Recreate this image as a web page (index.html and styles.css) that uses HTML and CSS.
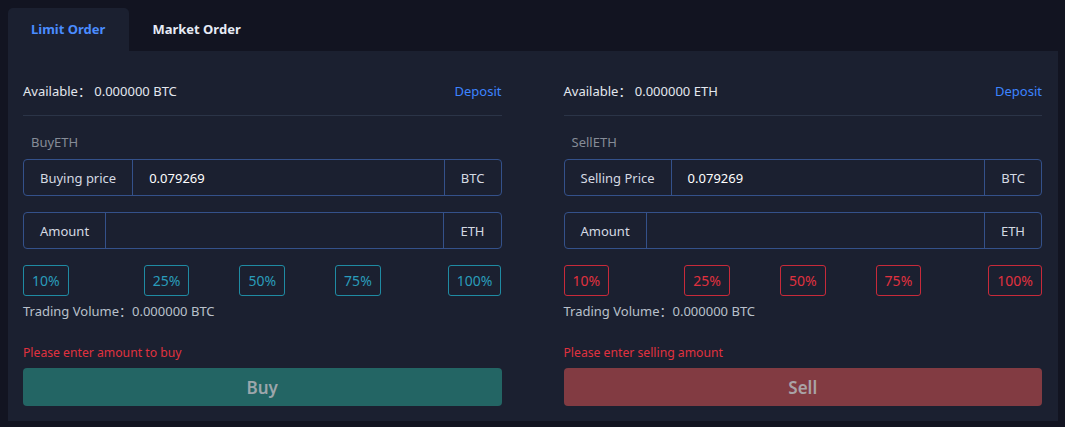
FILE: index.html
```html
<!DOCTYPE html>
<html>
<head>
<meta charset="utf-8">
<link rel="stylesheet" href="styles.css">
</head>
<body>
<div class="tabs">
  <div class="tab active">Limit Order</div>
  <div class="tab">Market Order</div>
</div>
<div class="panel">
  <div class="col">
    <div class="avail"><span>Available：&nbsp;0.000000 BTC</span><a class="deposit">Deposit</a></div>
    <div class="title">BuyETH</div>
    <div class="group">
      <div class="glabel">Buying price</div>
      <div class="gvalue">0.079269</div>
      <div class="gunit">BTC</div>
    </div>
    <div class="group g2">
      <div class="glabel">Amount</div>
      <div class="gvalue"></div>
      <div class="gunit">ETH</div>
    </div>
    <div class="pcts buy">
      <span class="pct">10%</span><span class="pct">25%</span><span class="pct">50%</span><span class="pct">75%</span><span class="pct">100%</span>
    </div>
    <div class="vol">Trading Volume：0.000000 BTC</div>
    <div class="err">Please enter amount to buy</div>
    <div class="btn btn-buy">Buy</div>
  </div>
  <div class="col">
    <div class="avail"><span>Available：&nbsp;0.000000 ETH</span><a class="deposit">Deposit</a></div>
    <div class="title">SellETH</div>
    <div class="group">
      <div class="glabel">Selling Price</div>
      <div class="gvalue">0.079269</div>
      <div class="gunit">BTC</div>
    </div>
    <div class="group g2">
      <div class="glabel">Amount</div>
      <div class="gvalue"></div>
      <div class="gunit">ETH</div>
    </div>
    <div class="pcts sell">
      <span class="pct">10%</span><span class="pct">25%</span><span class="pct">50%</span><span class="pct">75%</span><span class="pct">100%</span>
    </div>
    <div class="vol">Trading Volume：0.000000 BTC</div>
    <div class="err">Please enter selling amount</div>
    <div class="btn btn-sell">Sell</div>
  </div>
</div>
</body>
</html>
```
FILE: styles.css
```css
* { box-sizing: border-box; }
body {
  margin: 0;
  padding: 8px 7px 0 8px;
  background: #121421;
  font-family: "Noto Sans", "Noto Sans CJK SC", sans-serif;
  font-size: 13px;
  color: #d5dae3;
}
.tabs { display: flex; height: 43px; }
.tab {
  padding: 0 24px 0 23px;
  line-height: 43px;
  font-weight: bold;
  font-size: 13px;
  color: #e6ebf5;
  border-radius: 5px 5px 0 0;
}
.tab.active { background: #1b2030; color: #4a8cff; }
.panel {
  background: #1b2030;
  width: 1050px;
  display: flex;
  gap: 62px;
  padding: 31px 16px 15px 15px;
}
.col { flex: 1; display: flex; flex-direction: column; }
.avail {
  display: flex;
  justify-content: space-between;
  line-height: 18px;
  padding-bottom: 15px;
  border-bottom: 1px solid #2b3447;
  color: #e3e7ee;
}
.deposit { color: #3d84ff; }
.title {
  margin: 17px 0 0 8px;
  line-height: 18px;
  color: #868c97;
}
.group {
  margin-top: 8px;
  height: 37px;
  border: 1px solid #34518a;
  border-radius: 4px;
  display: flex;
  align-items: stretch;
}
.group.g2 { margin-top: 16px; }
.glabel {
  padding: 0 16px;
  display: flex;
  align-items: center;
  border-right: 1px solid #34518a;
  color: #d5dae3;
}
.gvalue {
  flex: 1;
  padding-left: 16px;
  display: flex;
  align-items: center;
  color: #ffffff;
}
.gunit {
  padding: 0 16px;
  display: flex;
  align-items: center;
  border-left: 1px solid #34518a;
  color: #d5dae3;
}
.pcts {
  margin-top: 16px;
  display: grid;
  grid-template-columns: repeat(5, 1fr);
  align-items: center;
}
.pct {
  justify-self: center;
  height: 31px;
  line-height: 29px;
  padding: 0 8px;
  font-size: 14px;
  border: 1px solid;
  border-radius: 3px;
}
.pct:first-child { justify-self: start; }
.pct:last-child { justify-self: end; }
.buy .pct { color: #2a9cba; border-color: #1f8ba3; }
.sell .pct { color: #e0313f; border-color: #c82a3a; }
.vol { margin-top: 6px; line-height: 18px; color: #b9c0cb; }
.err { margin-top: 24px; line-height: 18px; color: #e0323f; font-size: 12.2px; }
.btn {
  margin-top: 6px;
  height: 38px;
  border-radius: 4px;
  display: flex;
  align-items: center;
  justify-content: center;
  font-size: 17px;
  font-weight: 600;
}
.btn-buy { background: #236564; color: #9ca6ab; }
.btn-sell { background: #823b42; color: #a9a3a6; }
```
